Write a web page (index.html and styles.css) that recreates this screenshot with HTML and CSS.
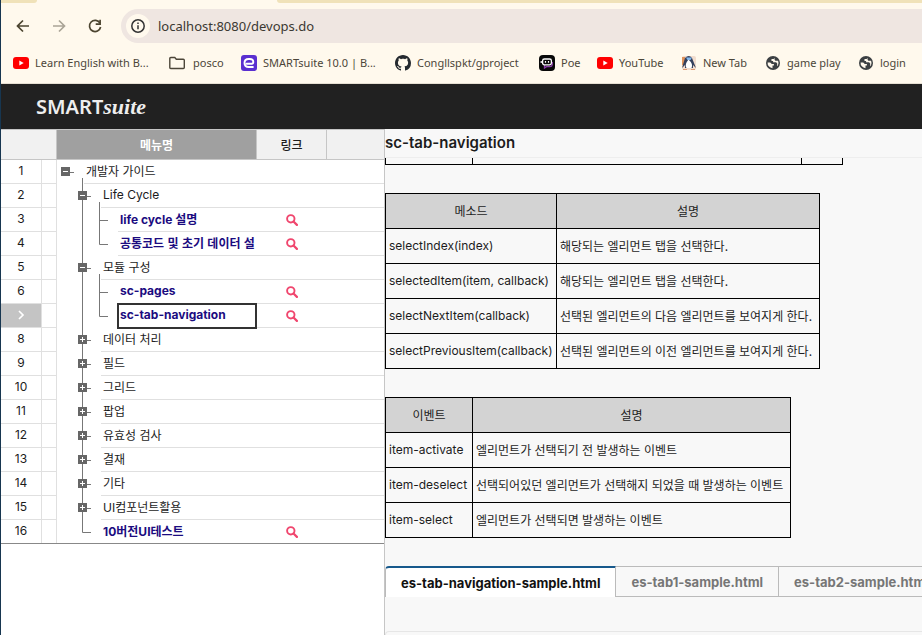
FILE: index.html
```html
<!DOCTYPE html>
<html lang="ko">
<head>
<meta charset="utf-8">
<title>SMARTsuite</title>
<link rel="stylesheet" href="styles.css">
</head>
<body>
<svg class="defs" aria-hidden="true">
  <symbol id="youtube" viewBox="0 0 16 16"><rect y="2" width="16" height="12" rx="3" fill="#f00"/><path d="M6.300 5.500v5L10.700 8z" fill="#fff"/></symbol>
  <symbol id="globe" viewBox="0 0 16 16"><circle cx="8" cy="8" r="7" fill="#3c4043"/><path d="M2.600 7.400h2.600l1.600 1.500h2.100v1.500H7.500v2.800A5.400 5.400 0 0 1 2.600 7.400zM9.600 2.900 8.600 4H6.500v2h1.600v1.300h3l1.100 1.300v2.600l.7-.8a5.400 5.400 0 0 0 .2-4.600h-2.700l-.8-1V2.900z" fill="#fff9ed"/></symbol>
  <symbol id="search" viewBox="0 0 12 12"><circle cx="4.800" cy="4.800" r="3.700" fill="none" stroke="#f0466e" stroke-width="1.900"/><path d="m7.500 7.500 3.400 3.400" stroke="#f0466e" stroke-width="2.200" stroke-linecap="round"/></symbol>
  <symbol id="g-root" viewBox="0 0 27 24"><path d="M13 12.500h4M25.500 18v6" stroke="#777"/><path d="M4 7h9v9H4z" fill="#666"/><path d="M6 11.500h5" stroke="#fff"/></symbol>
  <symbol id="g-open" viewBox="0 0 44 24"><path d="M25.500 0v24M30 12.500h4M42.500 18v6" stroke="#777"/><path d="M21 7h9v9h-9z" fill="#666"/><path d="M23 11.500h5" stroke="#fff"/></symbol>
  <symbol id="g-closed" viewBox="0 0 44 24"><path d="M25.500 0v24M30 12.500h4" stroke="#777"/><path d="M21 7h9v9h-9z" fill="#666"/><path d="M23 11.500h5M25.500 9v5" stroke="#fff"/></symbol>
  <symbol id="g-end" viewBox="0 0 44 24"><path d="M25.500 0v12.500H34" fill="none" stroke="#777"/></symbol>
  <symbol id="g-leaf" viewBox="0 0 61 24"><path d="M25.500 0v24M42.500 0v24M42.500 12.500H51" stroke="#777"/></symbol>
  <symbol id="g-last" viewBox="0 0 61 24"><path d="M25.500 0v24M42.500 0v12.500H51" fill="none" stroke="#777"/></symbol>
</svg>
<div class="window">
  <header class="browser">
    <div class="tabstrip"><span class="tab-left"></span><span class="tab-right"></span></div>
    <div class="toolbar">
      <button class="nav" aria-label="Back"><svg width="16" height="16" viewBox="0 0 16 16"><path d="M14 8H3M8 2.500 2.500 8 8 13.500" fill="none" stroke="#4c4530" stroke-width="1.700"/></svg></button>
      <button class="nav" aria-label="Forward"><svg width="16" height="16" viewBox="0 0 16 16"><path d="M2 8H13M8 2.500 13.500 8 8 13.500" fill="none" stroke="#aaa497" stroke-width="1.700"/></svg></button>
      <button class="nav" aria-label="Reload"><svg width="16" height="16" viewBox="0 0 16 16"><path d="M13 5.200A5.600 5.600 0 1 0 13.600 9" fill="none" stroke="#4c4530" stroke-width="1.700"/><path d="M13.100 1.800v4.400H8.700" fill="none" stroke="#4c4530" stroke-width="1.700"/></svg></button>
      <div class="address">
        <button class="site-info" aria-label="Site information"><svg width="16" height="16" viewBox="0 0 16 16"><circle cx="8" cy="8" r="6.200" fill="none" stroke="#333" stroke-width="1.500"/><path d="M8 7.200v4M8 4.500v1.600" stroke="#333" stroke-width="1.500"/></svg></button>
        <input class="url" aria-label="Address" value="localhost:8080/devops.do">
      </div>
    </div>
    <nav class="bookmarks">
      <a href="#"><svg><use href="#youtube"/></svg>Learn English with B...</a>
      <a href="#" class="folder"><svg viewBox="0 0 16 16"><path d="M.8 3.500q0-1 1-1h4l1.500 1.700h7q1 0 1 1v7.300q0 1-1 1H1.800q-1 0-1-1z" fill="none" stroke="#4c4639" stroke-width="1.400"/></svg>posco</a>
      <a href="#"><svg viewBox="0 0 16 16"><rect width="16" height="16" rx="3" fill="#5a2fd0"/><path d="M5.600 8.700h5.200q1.500 0 1.500-1.600Q12.300 4 8.800 4H7.700Q3.500 4 3.500 8t4.200 4h4.200" fill="none" stroke="#fff" stroke-width="1.900" stroke-linecap="round"/></svg>SMARTsuite 10.0 | B...</a>
      <a href="#"><svg viewBox="0 0 16 16"><path fill="#24292f" d="M8 0C3.580 0 0 3.580 0 8c0 3.540 2.290 6.530 5.470 7.590.4.070.55-.17.55-.38 0-.19-.01-.82-.01-1.490-2.010.37-2.530-.49-2.690-.94-.09-.23-.48-.94-.82-1.130-.28-.15-.68-.52-.01-.53.63-.01 1.080.58 1.230.82.72 1.210 1.870.87 2.330.66.07-.52.28-.87.51-1.070-1.780-.2-3.640-.89-3.640-3.950 0-.87.31-1.590.82-2.150-.08-.2-.36-1.020.08-2.120 0 0 .67-.21 2.200.82.64-.18 1.320-.27 2-.27s1.360.09 2 .27c1.530-1.040 2.200-.82 2.200-.82.44 1.100.16 1.920.08 2.120.51.56.82 1.270.82 2.150 0 3.070-1.870 3.750-3.650 3.950.29.25.54.73.54 1.480 0 1.070-.01 1.930-.01 2.200 0 .21.15.46.55.38A8.010 8.010 0 0 0 16 8c0-4.420-3.580-8-8-8z"/></svg>Congllspkt/gproject</a>
      <a href="#"><svg viewBox="0 0 16 16"><rect width="16" height="16" rx="4" fill="#080808"/><path d="M5.500 10v3l2-1.300h3.500q2 0 2.300-2V7" fill="none" stroke="#883aa8" stroke-width="1.300"/><rect x="3.600" y="4" width="8.800" height="5.800" rx="1.800" fill="none" stroke="#fff" stroke-width="1.300"/><path d="M6.500 6v1.800M9.500 6v1.800M2.200 6v2" stroke="#fff" stroke-width="1.200"/></svg>Poe</a>
      <a href="#"><svg><use href="#youtube"/></svg>YouTube</a>
      <a href="#"><svg viewBox="0 0 16 16"><rect x="1" y="1" width="14" height="14" rx="2" fill="#f1dccd"/><path d="M1 2h3v8H1z" fill="#df935b"/><path d="M4 3q4-4 7 0l4 10-3-3v3H4v-3l-3 3z" fill="#34405d"/><path d="M7.500 4.500Q3 10 5.500 13h5q2-4-3-8.500z" fill="#fff"/><path d="M5 2.500h6L9.500 5h-3z" fill="#84b9ee"/><path d="M2 14.500h4m4 0h4" stroke="#dc9a73"/></svg>New Tab</a>
      <a href="#"><svg><use href="#globe"/></svg>game play</a>
      <a href="#"><svg><use href="#globe"/></svg>login</a>
    </nav>
  </header>
  <div class="brand"><span class="brand-main">SMART</span><span class="brand-sub">suite</span></div>
  <div class="workspace">
    <aside class="sidebar">
      <table class="tree">
        <colgroup><col class="c-num"><col class="c-gap"><col class="c-menu"><col class="c-link"><col></colgroup>
        <thead><tr><th colspan="2"></th><th class="sorted">메뉴명</th><th>링크</th><th></th></tr></thead>
        <tbody>
          <tr><td>1</td><td></td><td><div class="node"><svg class="l1"><use href="#g-root"/></svg><span class="ko">개발자 가이드</span></div></td><td></td><td></td></tr>
          <tr><td>2</td><td></td><td><div class="node"><svg class="l2"><use href="#g-open"/></svg><span>Life Cycle</span></div></td><td></td><td></td></tr>
          <tr><td>3</td><td></td><td><div class="node"><svg class="l3"><use href="#g-leaf"/></svg><a href="#">life cycle <span class="ko">설명</span></a></div></td><td><button class="find" aria-label="열기"><svg><use href="#search"/></svg></button></td><td></td></tr>
          <tr><td>4</td><td></td><td><div class="node"><svg class="l3"><use href="#g-last"/></svg><a href="#" class="ko">공통코드 및 초기 데이터 설</a></div></td><td><button class="find" aria-label="열기"><svg><use href="#search"/></svg></button></td><td></td></tr>
          <tr><td>5</td><td></td><td><div class="node"><svg class="l2"><use href="#g-open"/></svg><span class="ko">모듈 구성</span></div></td><td></td><td></td></tr>
          <tr><td>6</td><td></td><td><div class="node"><svg class="l3"><use href="#g-leaf"/></svg><a href="#">sc-pages</a></div></td><td><button class="find" aria-label="열기"><svg><use href="#search"/></svg></button></td><td></td></tr>
          <tr><td class="current"><svg width="8" height="10" viewBox="0 0 8 10"><path d="m2 1 4 4-4 4" fill="none" stroke="#fff" stroke-width="1.700"/></svg></td><td></td><td><div class="node"><svg class="l3"><use href="#g-last"/></svg><a href="#" class="focused">sc-tab-navigation</a></div></td><td><button class="find" aria-label="열기"><svg><use href="#search"/></svg></button></td><td></td></tr>
          <tr><td>8</td><td></td><td><div class="node"><svg class="l2"><use href="#g-closed"/></svg><span class="ko">데이터 처리</span></div></td><td></td><td></td></tr>
          <tr><td>9</td><td></td><td><div class="node"><svg class="l2"><use href="#g-closed"/></svg><span class="ko">필드</span></div></td><td></td><td></td></tr>
          <tr><td>10</td><td></td><td><div class="node"><svg class="l2"><use href="#g-closed"/></svg><span class="ko">그리드</span></div></td><td></td><td></td></tr>
          <tr><td>11</td><td></td><td><div class="node"><svg class="l2"><use href="#g-closed"/></svg><span class="ko">팝업</span></div></td><td></td><td></td></tr>
          <tr><td>12</td><td></td><td><div class="node"><svg class="l2"><use href="#g-closed"/></svg><span class="ko">유효성 검사</span></div></td><td></td><td></td></tr>
          <tr><td>13</td><td></td><td><div class="node"><svg class="l2"><use href="#g-closed"/></svg><span class="ko">결재</span></div></td><td></td><td></td></tr>
          <tr><td>14</td><td></td><td><div class="node"><svg class="l2"><use href="#g-closed"/></svg><span class="ko">기타</span></div></td><td></td><td></td></tr>
          <tr><td>15</td><td></td><td><div class="node"><svg class="l2"><use href="#g-closed"/></svg><span>UI<span class="ko">컴포넌트활용</span></span></div></td><td></td><td></td></tr>
          <tr><td>16</td><td></td><td><div class="node"><svg class="l2"><use href="#g-end"/></svg><a href="#">10<span class="ko">버전</span>UI<span class="ko">테스트</span></a></div></td><td><button class="find" aria-label="열기"><svg><use href="#search"/></svg></button></td><td></td></tr>
        </tbody>
      </table>
    </aside>
    <main class="content">
      <h1>sc-tab-navigation</h1>
      <table class="doc tail"><colgroup><col class="w-event"><col class="w-tail"><col class="w-flag"></colgroup><tbody><tr><td></td><td></td><td></td></tr></tbody></table>
      <table class="doc">
        <colgroup><col class="w-method"><col class="w-method-desc"></colgroup>
        <thead><tr><th>메소드</th><th>설명</th></tr></thead>
        <tbody>
          <tr><td>selectIndex(index)</td><td class="ko">해당되는 엘리먼트 탭을 선택한다.</td></tr>
          <tr><td>selectedItem(item, callback)</td><td class="ko">해당되는 엘리먼트 탭을 선택한다.</td></tr>
          <tr><td>selectNextItem(callback)</td><td class="ko">선택된 엘리먼트의 다음 엘리먼트를 보여지게 한다.</td></tr>
          <tr><td>selectPreviousItem(callback)</td><td class="ko">선택된 엘리먼트의 이전 엘리먼트를 보여지게 한다.</td></tr>
        </tbody>
      </table>
      <table class="doc">
        <colgroup><col class="w-event"><col class="w-event-desc"></colgroup>
        <thead><tr><th>이벤트</th><th>설명</th></tr></thead>
        <tbody>
          <tr><td>item-activate</td><td class="ko">엘리먼트가 선택되기 전 발생하는 이벤트</td></tr>
          <tr><td>item-deselect</td><td class="ko">선택되어있던 엘리먼트가 선택해지 되었을 때 발생하는 이벤트</td></tr>
          <tr><td>item-select</td><td class="ko">엘리먼트가 선택되면 발생하는 이벤트</td></tr>
        </tbody>
      </table>
      <div class="tabs" role="tablist">
        <button class="tab active" role="tab" aria-selected="true">es-tab-navigation-sample.html</button>
        <button class="tab" role="tab">es-tab1-sample.html</button>
        <button class="tab" role="tab">es-tab2-sample.html</button>
      </div>
      <section class="panel"></section>
    </main>
  </div>
</div>
</body>
</html>
```
FILE: styles.css
```css
* { box-sizing: border-box; }
body {
  margin: 0;
  background: #fff;
  color: #1c1c1c;
  font: 12px/20px Inter, "Noto Sans CJK KR", sans-serif;
}
button, input { font: inherit; border: 0; padding: 0; margin: 0; background: none; }
a { color: inherit; text-decoration: none; }
svg { display: block; flex: none; }
table { border-collapse: separate; border-spacing: 0; table-layout: fixed; }
.defs { position: absolute; width: 0; height: 0; }
.ko { font-family: "Noto Sans CJK KR", sans-serif; }

.window {
  display: flex;
  flex-direction: column;
  height: 100vh;
  overflow: hidden;
  border-left: 1px solid #173650;
}

.browser {
  background: #fff9ed;
  border-bottom: 1px solid #e6dfd2;
  color: #4c4639;
  font-family: "Noto Sans", sans-serif;
  font-size: 11px;
}
.tabstrip { display: flex; justify-content: space-between; height: 3px; }
.tab-left { width: 36px; background: #f0e2b9; border-bottom-right-radius: 6px; }
.tab-right { width: calc(100% - 276px); background: #f0e2b9; border-bottom-left-radius: 6px; }
.toolbar { display: flex; align-items: center; gap: 20px; padding: 6px 0 0 14px; }
.nav { width: 16px; height: 16px; }
.address {
  display: flex;
  flex: 1;
  align-items: center;
  gap: 8px;
  height: 34px;
  margin-left: -2px;
  padding-left: 5px;
  background: #efe6e1;
  border-radius: 17px 0 0 17px;
}
.site-info {
  display: grid;
  place-items: center;
  width: 24px;
  height: 24px;
  border-radius: 50%;
  background: #fff9ed;
}
.url { flex: 1; color: #3b3832; font-size: 13px; outline: 0; }
.bookmarks {
  display: grid;
  grid-template-columns: 156px 72px 154px 144px 58px 84px 84px 93px 1fr;
  height: 40px;
  padding-left: 12px;
  align-items: center;
}
.bookmarks a { display: flex; align-items: center; gap: 6px; white-space: nowrap; }
.bookmarks .folder { gap: 8px; }
.bookmarks svg { width: 16px; height: 16px; }

.brand {
  display: flex;
  align-items: baseline;
  flex: none;
  height: 45px;
  padding-left: 35px;
  background: #212121;
  color: #eee;
  line-height: 46px;
}
.brand-main { font-family: "Noto Sans", sans-serif; font-size: 20px; font-weight: 600; }
.brand-sub { font-family: "Liberation Serif", serif; font-size: 22px; font-style: italic; font-weight: 700; }

.workspace { display: grid; grid-template-columns: 384px 1fr; flex: 1; min-height: 0; }
.sidebar { border-right: 1px solid #c6c6c6; }
.tree { width: 100%; border-bottom: 1px solid #888; }
.c-num { width: 41px; }
.c-gap { width: 15px; }
.c-menu { width: 200px; }
.c-link { width: 70px; }
.tree th {
  height: 31px;
  padding: 0;
  border: solid #c6c6c6;
  border-width: 1px 1px 1px 0;
  background: #f1f1f1;
  font: 500 12px/20px "Noto Sans CJK KR", sans-serif;
}
.tree th:last-child { border-right: 0; }
.tree th.sorted { background: #a0a0a0; color: #fff; font-weight: 700; }
.tree td { height: 24px; padding: 0; border-bottom: 1px solid #e0e0e0; text-align: center; line-height: 21px; }
.tree td:nth-child(-n+2) { border-right: 1px solid #e0e0e0; }
.tree td:first-child { padding-bottom: 2px; }
.tree td:nth-child(3) { border-bottom: 0; }
.tree tr:last-child td { height: 23px; border-bottom: 0; }
.tree td.current { background: #c4c4c4; }
.current svg { margin: 0 auto; }
.node { display: flex; height: 24px; text-align: left; white-space: nowrap; }
.node svg { height: 24px; }
.node > span, .node > a { flex: 1; padding-left: 2px; border-bottom: 1px solid #e0e0e0; }
.tree tr:last-child .node { height: 23px; }
.tree tr:last-child .node > a { border-bottom: 0; }
.node a { color: #1b0b80; font-weight: 700; }
.node .focused { margin-right: 1px; outline: 2px solid #333; outline-offset: -1px; }
.l1 { width: 27px; }
.l2 { width: 44px; }
.l3 { width: 61px; }
.find { display: block; margin: 0 auto; padding-right: 1px; }
.find svg { width: 12px; height: 12px; }

.content { min-width: 0; overflow: hidden; background: #f8f8f8; }
h1 { margin: 0; height: 29px; border-bottom: 1px solid #eee; font-size: 15px; font-weight: 600; line-height: 28px; }
.doc { width: 0; margin-bottom: 28px; border-top: 1px solid #000; border-left: 1px solid #000; }
.doc th, .doc td { height: 35px; padding: 0 3px 1px; border: solid #000; border-width: 0 1px 1px 0; white-space: nowrap; }
.doc th { background: #d3d3d3; font: 400 12px/20px "Noto Sans CJK KR", sans-serif; }
.doc.tail { border-top: 0; }
.doc.tail td { height: 7px; }
.w-method { width: 171px; }
.w-method-desc { width: 263px; }
.w-event { width: 87px; }
.w-event-desc { width: 318px; }
.w-tail { width: 329px; }
.w-flag { width: 41px; }

.tabs { display: flex; }
.tab {
  flex: none;
  height: 31px;
  padding: 0 15px;
  border: solid #bbb;
  border-width: 1px 1px 1px 0;
  color: #767676;
  font-size: 13px;
  font-weight: 700;
}
.tab.active {
  border-top: 2px solid #17598c;
  border-bottom: 0;
  border-left: 1px solid #bbb;
  border-top-left-radius: 4px;
  background: #fff;
  color: #111;
}
.panel { height: 80px; margin-top: 34px; border: 1px solid #e6e6e6; border-right: 0; border-top-left-radius: 4px; }
```
